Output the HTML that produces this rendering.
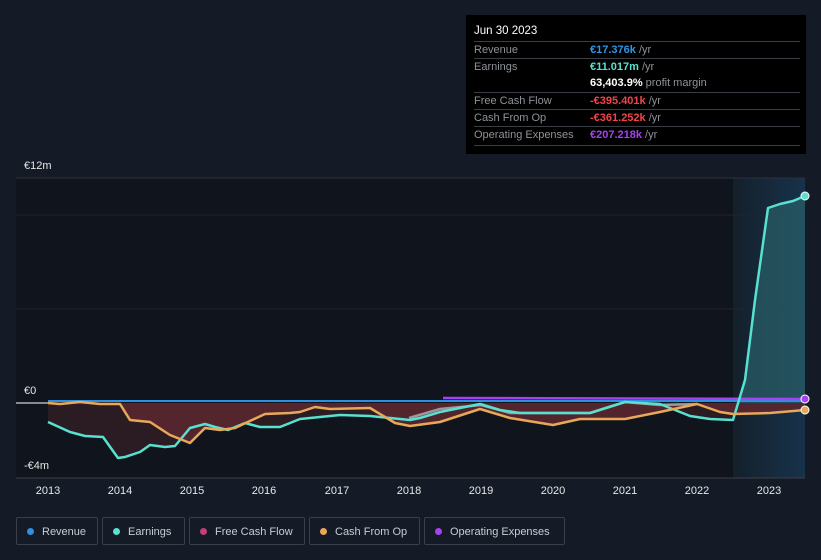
<!DOCTYPE html>
<html><head><style>
body{margin:0;width:821px;height:560px;background:#151b26;font-family:"Liberation Sans",sans-serif;overflow:hidden;position:relative}
.tt{position:absolute;left:466px;top:15px;width:340px;height:139px;background:#000;color:#fff;font-size:11px}
.tt .h{position:absolute;left:8px;top:10px;font-size:11.5px}
.row{position:absolute;left:8px;width:326px;border-top:1px solid #3a3d44;height:17px;line-height:17px;color:#8e9299}
.row span{position:absolute;left:116px}
.lbl{position:absolute;color:#e6e6e6;font-size:11px}
.yr{position:absolute;top:485px;color:#e6e6e6;font-size:11px;width:40px;text-align:center}
.leg{position:absolute;top:517px;height:28px;border:1px solid #3a3f4a;border-radius:2px;color:#c8ccd2;font-size:11px;line-height:28px;box-sizing:border-box}
.leg i{display:inline-block;width:7px;height:7px;border-radius:50%;margin:0 8px 0 10px}
</style></head><body>
<svg width="821" height="560" style="position:absolute;left:0;top:0">
<defs><linearGradient id="hl" x1="0" x2="1"><stop offset="0" stop-color="#14202b"/><stop offset="1" stop-color="#17324a"/></linearGradient></defs>
<rect x="16" y="178" width="717" height="300" fill="#10141c"/>
<rect x="733" y="178" width="72" height="300" fill="url(#hl)"/>
<line x1="16" y1="178" x2="805" y2="178" fill="none" stroke="#2a303b"/>
<line x1="16" y1="215" x2="805" y2="215" stroke="#1f2530"/>
<line x1="16" y1="309" x2="805" y2="309" stroke="#1f2530"/>
<line x1="16" y1="478" x2="805" y2="478" stroke="#3a3f4a"/>
<line x1="16" y1="403" x2="48" y2="403" stroke="#fff"/>
<path d="M48,403 L48,422 L70,432 L85,436 L103,437 L118,458 L125,457 L140,452 L150,445 L165,447 L175,446 L190,428 L205,424 L215,427 L228,430 L245,423 L260,427 L280,427 L300,419 L340,415 L370,416 L390,418 L410,420 L420,418 L440,412 L480,404 L500,410 L520,413 L590,413 L625,402 L660,404 L690,416 L710,419 L733,420 L733,403Z" fill="#2a1c22"/>
<path d="M48,403 L48,403 L60,404 L80,402 L100,404 L120,404 L130,420 L150,422 L170,435 L190,443 L205,428 L220,430 L235,428 L265,414 L290,413 L300,412 L315,407 L330,409 L370,408 L395,423 L410,426 L440,422 L480,409 L510,418 L553,425 L580,419 L625,419 L660,412 L697,404 L720,412 L733,414 L770,413 L805,410 L805,403Z" fill="#5a2730" opacity=".9"/>
<path d="M738,403 L745,380 L755,300 L768,208 L780,204 L793,201 L805,196 L805,403Z" fill="#2a6068" opacity=".7"/>
<path d="M48,401 L805,401" stroke="#2f8fe0" stroke-width="2" fill="none"/>
<path d="M443,398 L805,399" stroke="#a742f0" stroke-width="2.5" fill="none"/>
<path d="M409,418 L440,409 L481,405 L510,413 L590,413 L625,402 L660,405 L697,404" stroke="#9a9a9a" stroke-width="2.5" fill="none" stroke-linejoin="round"/>
<path d="M48,422 L70,432 L85,436 L103,437 L118,458 L125,457 L140,452 L150,445 L165,447 L175,446 L190,428 L205,424 L215,427 L228,430 L245,423 L260,427 L280,427 L300,419 L340,415 L370,416 L390,418 L410,420 L420,418 L440,412 L480,404 L500,410 L520,413 L590,413 L625,402 L660,404 L690,416 L710,419 L733,420 L745,380 L755,300 L768,208 L780,204 L793,201 L805,196" stroke="#58e0d0" stroke-width="2.5" fill="none" stroke-linejoin="round"/>
<path d="M48,403 L60,404 L80,402 L100,404 L120,404 L130,420 L150,422 L170,435 L190,443 L205,428 L220,430 L235,428 L265,414 L290,413 L300,412 L315,407 L330,409 L370,408 L395,423 L410,426 L440,422 L480,409 L510,418 L553,425 L580,419 L625,419 L660,412 L697,404 L720,412 L733,414 L770,413 L805,410" stroke="#e8a85a" stroke-width="2.5" fill="none" stroke-linejoin="round"/>
<circle cx="805" cy="196" r="4" fill="#58e0d0" stroke="#fff"/>
<circle cx="805" cy="399" r="4" fill="#a742f0" stroke="#fff"/>
<circle cx="805" cy="410" r="4" fill="#e8a85a" stroke="#fff"/>
</svg>
<div class="lbl" style="left:24px;top:160px">€12m</div>
<div class="lbl" style="left:24px;top:385px">€0</div>
<div class="lbl" style="left:24px;top:460px">-€4m</div>
<div class="yr" style="left:28px">2013</div><div class="yr" style="left:100px">2014</div><div class="yr" style="left:172px">2015</div><div class="yr" style="left:244px">2016</div><div class="yr" style="left:317px">2017</div><div class="yr" style="left:389px">2018</div><div class="yr" style="left:461px">2019</div><div class="yr" style="left:533px">2020</div><div class="yr" style="left:605px">2021</div><div class="yr" style="left:677px">2022</div><div class="yr" style="left:749px">2023</div>
<div class="tt"><div class="h">Jun 30 2023</div>
<div class="row" style="top:26px">Revenue<span><b style="color:#2f95e6">€17.376k</b> /yr</span></div>
<div class="row" style="top:43px">Earnings<span><b style="color:#58e0d0">€11.017m</b> /yr</span></div>
<div class="row" style="top:60px;border-top:none">&nbsp;<span><b style="color:#fff">63,403.9%</b> profit margin</span></div>
<div class="row" style="top:77px">Free Cash Flow<span><b style="color:#f0454a">-€395.401k</b> /yr</span></div>
<div class="row" style="top:94px">Cash From Op<span><b style="color:#f0454a">-€361.252k</b> /yr</span></div>
<div class="row" style="top:111px">Operating Expenses<span><b style="color:#a742f0">€207.218k</b> /yr</span></div>
<div class="row" style="top:130px;height:0"></div>
</div>
<div class="leg" style="left:16px;width:82px"><i style="background:#2f8fe0"></i>Revenue</div>
<div class="leg" style="left:102px;width:83px"><i style="background:#58e0d0"></i>Earnings</div>
<div class="leg" style="left:189px;width:116px"><i style="background:#c0407a"></i>Free Cash Flow</div>
<div class="leg" style="left:309px;width:111px"><i style="background:#e8a85a"></i>Cash From Op</div>
<div class="leg" style="left:424px;width:141px"><i style="background:#a742f0"></i>Operating Expenses</div>
</body></html>
